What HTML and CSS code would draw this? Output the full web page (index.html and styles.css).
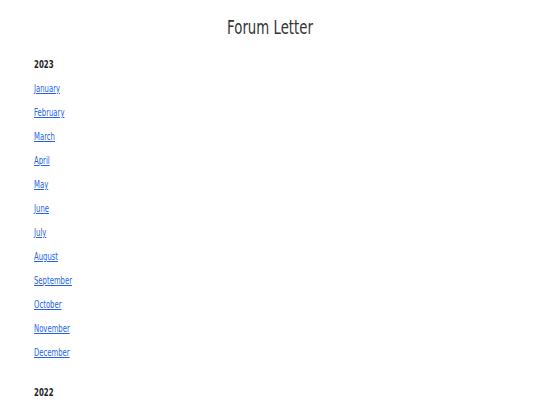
FILE: index.html
```html
<!DOCTYPE html>
<html lang="en">
<head>
<meta charset="utf-8">
<title>Forum Letter</title>
<link rel="stylesheet" href="styles.css">
</head>
<body>
<div class="page">
  <h1 class="title">Forum Letter</h1>
  <section class="archive">
    <h2 class="year">2023</h2>
    <ul class="months">
      <li><a href="#">January</a></li>
      <li><a href="#">February</a></li>
      <li><a href="#">March</a></li>
      <li><a href="#">April</a></li>
      <li><a href="#">May</a></li>
      <li><a href="#">June</a></li>
      <li><a href="#">July</a></li>
      <li><a href="#">August</a></li>
      <li><a href="#">September</a></li>
      <li><a href="#">October</a></li>
      <li><a href="#">November</a></li>
      <li><a href="#">December</a></li>
    </ul>
    <h2 class="year">2022</h2>
  </section>
</div>
</body>
</html>
```
FILE: styles.css
```css
html, body {
  margin: 0;
  padding: 0;
  background: #ffffff;
}
body {
  font-family: "DejaVu Sans", Verdana, sans-serif;
  color: #222222;
}
.page {
  padding-top: 15px;
}
.title {
  margin: 0;
  font-size: 20px;
  line-height: 24px;
  font-weight: normal;
  text-align: center;
  color: #333333;
  transform: scaleX(0.665);
  transform-origin: 50% 50%;
}
.archive {
  padding-left: 34px;
  display: flex;
  flex-direction: column;
  align-items: flex-start;
}
.year {
  margin: 19px 0 0;
  font-size: 11px;
  line-height: 14px;
  font-weight: bold;
  color: #222222;
  transform: scaleX(0.64);
  transform-origin: 0 50%;
}
.year + .months {
  margin-top: 10px;
}
.months {
  list-style: none;
  margin: 0;
  padding: 0;
  display: flex;
  flex-direction: column;
  align-items: flex-start;
  gap: 10px;
}
.months li {
  font-size: 11px;
  line-height: 14px;
  transform: scaleX(0.625);
  transform-origin: 0 50%;
}
.months a {
  color: #2563eb;
  text-decoration: underline;
}
.months + .year {
  margin-top: 26px;
}
```
